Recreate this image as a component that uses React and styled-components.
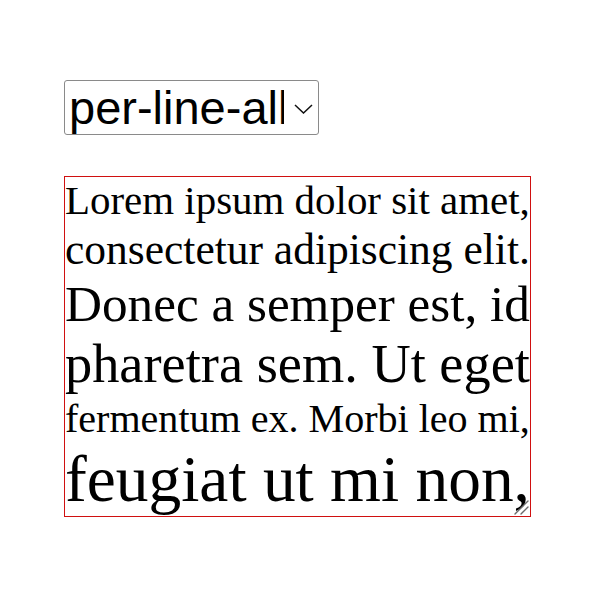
import React, { useLayoutEffect, useRef, useState } from "react";
import styled, { createGlobalStyle } from "styled-components";

const GlobalStyle = createGlobalStyle`
  html, body {
    margin: 0;
    padding: 0;
    background: #fff;
  }
`;

const Page = styled.div`
  padding: 80px 0 0 64px;
  display: flex;
  flex-direction: column;
  align-items: flex-start;
  gap: 41px;
`;

const SelectWrap = styled.div`
  position: relative;
  display: inline-flex;
`;

const ModeSelect = styled.select`
  appearance: none;
  -webkit-appearance: none;
  box-sizing: border-box;
  width: 255px;
  height: 55px;
  margin: 0;
  padding: 0 34px 0 4px;
  border: 1px solid #8a8a8a;
  border-radius: 3px;
  background: #fff;
  font-family: "Liberation Sans", Arial, sans-serif;
  font-size: 47px;
  line-height: 53px;
  color: #000;
  outline: none;
`;

const Chevron = styled.svg`
  position: absolute;
  right: 6px;
  top: 24px;
  width: 19px;
  height: 10px;
  pointer-events: none;
`;

const FitBox = styled.div`
  position: relative;
  box-sizing: border-box;
  width: 467px;
  height: 341px;
  border: 1px solid #d01010;
  overflow: hidden;
  resize: both;
  font-family: "Liberation Serif", "Times New Roman", serif;
  color: #000;

  &::-webkit-resizer {
    background: transparent;
  }
`;

const Line = styled.div`
  white-space: nowrap;
  width: max-content;
  line-height: normal;
`;

const Grip = styled.svg`
  position: absolute;
  right: 1px;
  bottom: 1px;
  width: 16px;
  height: 16px;
  pointer-events: none;
`;

const lines = [
  "Lorem ipsum dolor sit amet,",
  "consectetur adipiscing elit.",
  "Donec a semper est, id",
  "pharetra sem. Ut eget",
  "fermentum ex. Morbi leo mi,",
  "feugiat ut mi non,",
];

function FitText() {
  const boxRef = useRef(null);
  const lineRefs = useRef([]);
  const [sizes, setSizes] = useState(lines.map(() => 100));

  useLayoutEffect(() => {
    const inner = boxRef.current.clientWidth;
    const next = lineRefs.current.map((el) => {
      el.style.fontSize = "100px";
      const w = el.getBoundingClientRect().width;
      return (100 * inner) / w;
    });
    setSizes(next);
  }, []);

  return (
    <FitBox ref={boxRef}>
      {lines.map((text, i) => (
        <Line
          key={i}
          ref={(el) => (lineRefs.current[i] = el)}
          style={{ fontSize: sizes[i] + "px" }}
        >
          {text}
        </Line>
      ))}
      <Grip viewBox="0 0 16 16">
        <path
          d="M2 15 L15 2 M8 15 L15 8"
          stroke="#6b6b6b"
          strokeWidth="1.4"
          strokeLinecap="round"
          fill="none"
        />
      </Grip>
    </FitBox>
  );
}

export default function App() {
  return (
    <>
      <GlobalStyle />
      <Page>
        <SelectWrap>
          <ModeSelect defaultValue="per-line-all">
            <option value="per-line-all">per-line-all</option>
            <option value="per-line">per-line</option>
            <option value="all">all</option>
          </ModeSelect>
          <Chevron viewBox="0 0 19 10">
            <path
              d="M1 1 L9.5 9 L18 1"
              stroke="#111"
              strokeWidth="1.5"
              fill="none"
            />
          </Chevron>
        </SelectWrap>
        <FitText />
      </Page>
    </>
  );
}
